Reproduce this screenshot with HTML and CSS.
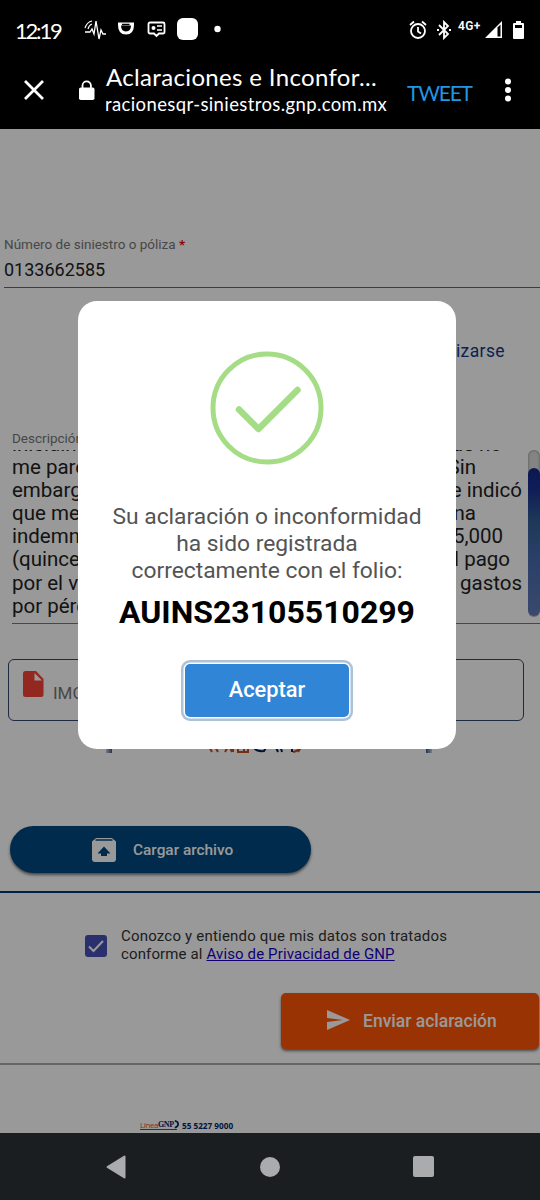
FILE: index.html
```html
<!DOCTYPE html>
<html lang="es">
<head>
<meta charset="utf-8">
<title>Aclaraciones e Inconformidades</title>
<link rel="stylesheet" href="styles.css">
</head>
<body>
<div class="phone">
  <header class="top">
    <div class="status">
      <span class="clock">12:19</span>
      <svg class="status-left" width="146" height="24" viewBox="0 0 146 24" fill="none" stroke="#fff">
        <path d="M1 14h5l2-3 2 5 2-13 3 18 2-9 2 4h3" stroke-width="1.3"/>
        <path d="M1 10q2-6 7-7M4 11q1-4 4-5" stroke-width="1.2"/>
        <path d="M35.500 6h13v1q0 8-6.500 8t-6.500-8z" stroke-width="3"/><path d="M38 6.500h7.500" stroke="#000" stroke-width="1.500"/>
        <path d="M66 4.500h13a1.500 1.500 0 0 1 1.500 1.500v8a1.500 1.500 0 0 1-1.500 1.500h-4L72.500 18 70 15.500h-4a1.500 1.500 0 0 1-1.500-1.500V6a1.500 1.500 0 0 1 1.500-1.500z" stroke-width="1.800"/>
        <circle cx="69.500" cy="10" r="2" fill="#fff" stroke="none"/><path d="M73 8h5M73 12h5" stroke-width="1.600"/>
        <rect x="93" y="0" width="21" height="22" rx="6" fill="#fff" stroke="none"/>
        <circle cx="133.500" cy="11" r="3.200" fill="#fff" stroke="none"/>
      </svg>
      <div class="status-right">
        <svg width="18" height="20" viewBox="0 0 18 20" fill="none" stroke="#fff" stroke-width="1.800"><circle cx="9" cy="11" r="7"/><path d="M9 7v4.500l3 2M1 5l4-3.500M17 5l-4-3.500"/></svg>
        <svg class="bt" width="16" height="20" viewBox="0 0 16 20" fill="none" stroke="#fff" stroke-width="1.800"><path d="M3 5l9 9-4 4V2l4 4-9 9"/><path d="M1 10h2M13 10h2" stroke-width="2"/></svg>
        <span class="net">4G+</span>
        <svg width="17" height="18" viewBox="0 0 17 18"><path d="M0 17L17 0v17z" fill="#fff"/><path d="M12.500 6.500L15.500 3.500V15.500h-3z" fill="#000"/></svg>
        <svg class="battery" width="12" height="18" viewBox="0 0 12 18"><path d="M3 0h5v2h2q1 0 1 1v14q0 1-1 1H1q-1 0-1-1V3q0-1 1-1h2z" fill="#fff"/><path d="M2 4h7v3H2z" fill="#000"/></svg>
      </div>
    </div>
    <div class="bar">
      <svg class="close" width="20" height="20" viewBox="0 0 20 20" stroke="#fff" stroke-width="2.700"><path d="M1 1l18 18M19 1L1 19"/></svg>
      <svg class="lock" width="16" height="20" viewBox="0 0 16 20"><rect y="7.500" width="15.500" height="12.500" rx="1.800" fill="#fff"/><path d="M3.500 8V5.500a4.200 4.200 0 0 1 8.400 0V8" fill="none" stroke="#fff" stroke-width="1.800"/></svg>
      <div class="titles">
        <div class="title">Aclaraciones e Inconfor...</div>
        <div class="url"><span>racionesqr-siniestros.gnp.com.mx</span></div>
      </div>
      <span class="tweet">TWEET</span>
      <svg class="more" width="6" height="24" viewBox="0 0 6 24" fill="#fff"><circle cx="3" cy="3.500" r="3"/><circle cx="3" cy="12" r="3"/><circle cx="3" cy="20.500" r="3"/></svg>
    </div>
  </header>

  <main class="page">
    <section class="field">
      <div class="label">Número de siniestro o póliza <b>*</b></div>
      <div class="value">0133662585</div>
    </section>
    <div class="option">izarse</div>
    <section class="description">
      <div class="label">Descripción</div>
      <div class="area">
        <div class="lines">
          <p><span>inicialmen</span><span class="end-a">que no</span></p>
          <p><span>me pare</span><span class="end-b">Sin</span></p>
          <p><span>embarg</span><span>e indicó</span></p>
          <p><span>que me</span><span class="end-b">na</span></p>
          <p><span>indemn</span><span class="end-c">5,000</span></p>
          <p><span>(quince</span><span class="end-d">l pago</span></p>
          <p><span>por el v</span><span>gastos</span></p>
          <p><span>por pérd</span></p>
        </div>
        <div class="scroll"><div class="thumb"></div></div>
      </div>
    </section>
    <div class="file">
      <svg width="21" height="26" viewBox="0 0 21 26"><path d="M2.500 0H13l7.500 8v15.500Q20.500 26 18 26H2.500Q0 26 0 23.500v-21Q0 0 2.500 0z" fill="#f44336"/><path d="M11.500 2v7.500H19z" fill="#fff"/></svg>
      <span>IMG</span>
    </div>
    <div class="preview">
      <i></i>
      <svg width="96" height="12" viewBox="0 0 96 12" fill="none" stroke-width="2"><g stroke="#c84a20"><path d="M1 4l4 7M7 4l4 7M18 11l4-7 3 7M26 11V5M31 6v5h10V5M37 5v6M86 11q6-1 7-6M91 11l4-6"/></g><g stroke="#00205c"><path d="M46 5q2 6 11 5l3-5M68 4l3 7M73 4l2 7M80 5v1M85 4v7"/></g></svg>
      <i></i>
    </div>
    <button class="upload">
      <svg width="24" height="24" viewBox="0 0 24 24"><path d="M4 0h16l4 3.500V21q0 3-3 3H3q-3 0-3-3V3.500z" fill="#fff"/><path d="M3.500 2h17" stroke="#004881" stroke-width="1.500"/><path d="M12 8.500l6.500 7H15V18H9v-2.500H5.500z" fill="#004881"/></svg>
      <span>Cargar archivo</span>
    </button>
    <div class="consent">
      <svg width="22" height="22" viewBox="0 0 22 22"><rect width="22" height="22" rx="3" fill="#4650b8"/><path d="M4 11.500l4.500 4.500L18 6" fill="none" stroke="#fff" stroke-width="2"/></svg>
      <p><span class="c1">Conozco y entiendo que mis datos son tratados</span><br><span class="c2">conforme al <a>Aviso de Privacidad de GNP</a></span></p>
    </div>
    <div class="actions">
      <button class="send">
        <svg width="23" height="20" viewBox="0 0 23 20"><path d="M0 0l23 10L0 20v-8l16-2L0 8z" fill="#fff"/></svg>
        <span>Enviar aclaración</span>
      </button>
    </div>
    <footer class="contact">
      <span class="brand"><em>Línea</em><b>GNP</b><svg width="5" height="9" viewBox="0 0 6 9"><path d="M1 0q4 1 4 4T1 8.500" fill="none" stroke="#00276b" stroke-width="2"/></svg></span>
      <span class="phone-number">55 5227 9000</span>
    </footer>

    <div class="backdrop"></div>
    <div class="modal">
      <svg class="success" width="114" height="114" viewBox="0 0 114 114" fill="none" stroke="#a5dc86"><circle cx="57" cy="57" r="54" stroke-width="5"/><path d="M29 58.500L48.500 78 87.500 39" stroke-width="6.500" stroke-linecap="round" stroke-linejoin="round"/></svg>
      <p class="message">Su aclaración o inconformidad<br>ha sido registrada<br>correctamente con el folio:</p>
      <strong class="folio">AUINS23105510299</strong>
      <button class="accept">Aceptar</button>
    </div>
  </main>

  <nav class="nav">
    <svg width="20" height="24" viewBox="0 0 20 24"><path d="M18.500 1.500v21L1.500 12z" fill="#a9abac" stroke="#a9abac" stroke-width="2" stroke-linejoin="round"/></svg>
    <svg width="20" height="20" viewBox="0 0 20 20"><circle cx="10" cy="10" r="10" fill="#a9abac"/></svg>
    <svg width="21" height="21" viewBox="0 0 21 21"><rect width="21" height="21" rx="2" fill="#a9abac"/></svg>
  </nav>
</div>
</body>
</html>
```

FILE: styles.css
```css
* { box-sizing: border-box; }
body { margin: 0; font-family: Roboto, sans-serif; }
p { margin: 0; }
svg { display: block; flex: none; }
button { border: 0; font-family: inherit; padding: 0; color: #fff; }

.phone { width: 540px; height: 1200px; display: flex; flex-direction: column; overflow: hidden; }

.top { height: 129px; background: #000; color: #fff; font-family: Lato, sans-serif; flex: none; }
.status { height: 54px; padding: 6px 15px 0; display: flex; align-items: center; }
.clock { font-size: 22px; width: 69px; letter-spacing: -2.2px; white-space: nowrap; }
.status-right { margin-left: auto; display: flex; align-items: center; }
.bt { margin-left: 9px; }
.net { font: 600 12px/14px Roboto, sans-serif; letter-spacing: .4px; margin: -9px 3px 0 6px; width: 24px; }
.battery { margin-left: 11px; }

.bar { display: flex; height: 72px; padding-left: 24px; align-items: center; }
.lock { margin-left: 35px; }
.titles { margin-left: 11px; width: 284px; white-space: nowrap; }
.title { font-size: 24px; line-height: 28px; letter-spacing: .34px; }
.url { font-size: 18.5px; line-height: 26px; letter-spacing: .38px; overflow: hidden; }
.url span { margin-left: -1px; }
.tweet { font-size: 21px; color: #2196e3; margin: 4px 0 0 17px; width: 66px; letter-spacing: -1.2px; }
.more { margin-left: 32px; }

.page { position: relative; flex: none; height: 1004px; background: #fff; overflow: hidden; padding-top: 106px; }
.label { font-size: 13.5px; line-height: 18px; color: #777; white-space: nowrap; }
.field { margin-left: 4px; height: 53px; border-bottom: 1px solid #666; }
.field b { color: #e30613; }
.value { font-size: 18px; line-height: 34px; color: #222; }
.option { margin: 52px 35px 0 0; height: 24px; font-size: 17.5px; line-height: 23px; text-align: right; color: #123a87; letter-spacing: .4px; }
.description { margin: 65px 0 0 12px; }
.area { height: 174px; margin-top: 3px; display: flex; border-bottom: 1px solid #777; }
.lines { width: 510px; height: 169px; padding-bottom: 1px; overflow: hidden; display: flex; flex-direction: column; justify-content: flex-end; }
.lines p { flex: none; height: 23.2px; line-height: 23.2px; font-size: 20.5px; color: #222; display: flex; justify-content: space-between; white-space: nowrap; }
.end-a { margin-right: 20px; }
.end-b { margin-right: 46px; }
.end-c { margin-right: 19px; }
.end-d { margin-right: 12px; }
.scroll { width: 12px; margin-left: 6px; height: 167px; border-radius: 6px; background: #ddd; box-shadow: inset 0 0 3px #888; padding-top: 18px; }
.thumb { height: 148px; border-radius: 6px; background: linear-gradient(#12298a, #1a3092 14%, #335e94 36%, #486aae 60%, #6279b8); }

.file { margin: 35px 16px 0 8px; height: 62px; border: 1px solid #30496e; border-radius: 6px; display: flex; padding: 11px 0 0 14px; color: #777; font-size: 17px; }
.file span { margin: 12px 0 0 9px; }
.preview { height: 12px; margin: 20px 103px 0 106px; display: flex; }
.preview svg { margin: 0 123px 0 95px; }
.preview i { width: 6px; height: 12px; background: linear-gradient(90deg, #ccc, #385d8c); }
.preview i:last-child { transform: scaleX(-1); }
.upload { display: flex; align-items: center; margin: 73px 0 0 10px; width: 301px; height: 47px; border-radius: 24px; background: #004881; padding-left: 82px; box-shadow: 0 2px 3px #777; }
.upload span { font-size: 15.400px; font-weight: 500; margin-left: 17px; }
.consent { border-top: 2px solid #003575; margin-top: 18px; height: 102px; padding: 34px 0 0 85px; display: flex; }
.consent svg { margin-top: 8px; }
.consent p { margin-left: 14px; font-size: 15px; line-height: 18px; color: #333; white-space: nowrap; letter-spacing: .2px; }
.c2 { letter-spacing: .13px; }
.consent a { color: #1a00c8; text-decoration: underline; }
.actions { height: 72px; border-bottom: 2px solid #aaa; display: flex; justify-content: flex-end; padding-right: 1px; }
.send { width: 258px; height: 56px; background: #ff5607; border-radius: 5px; display: flex; align-items: center; padding-left: 46px; box-shadow: 0 2px 3px #777; }
.send svg { margin-top: -3px; }
.send span { font-size: 17.500px; font-weight: 500; margin: -1px 0 0 13px; }
.contact { display: flex; align-items: center; margin: 54px 0 0 140px; height: 12px; }
.brand { display: flex; align-items: center; width: 37px; height: 10px; font: 8px "Liberation Serif", serif; letter-spacing: -.4px; border-bottom: 1px solid #285b8b; }
.brand em { font: 8px "Open Sans", sans-serif; color: #e94e1b; }
.brand b { color: #00276b; }
.phone-number { font: 700 8.200px "Open Sans", sans-serif; color: #00276b; margin-left: 5px; white-space: nowrap; }

.backdrop { position: absolute; inset: 0; background: rgba(0, 0, 0, .4); }
.modal { position: absolute; left: 78px; top: 172px; width: 378px; height: 448px; background: #fff; border-radius: 19px; display: flex; flex-direction: column; align-items: center; padding-top: 50px; }
.message { margin-top: 38px; font-size: 22.800px; line-height: 27px; color: #545454; text-align: center; white-space: nowrap; }
.folio { font-size: 32px; line-height: 40px; color: #000; margin-top: 8px; }
.accept { margin-top: 32px; width: 164px; height: 53px; background: #3085d6; border-radius: 5px; font-size: 21.800px; font-weight: 500; padding-bottom: 2px; box-shadow: 0 0 0 1.500px #fff, 0 0 0 4px #adc1d8; }

.nav { height: 67px; background: #1a1e20; display: flex; align-items: center; justify-content: space-between; padding: 0 106px; flex: none; }
```
